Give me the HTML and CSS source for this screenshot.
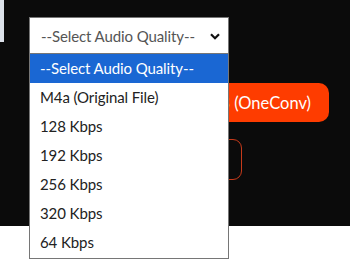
FILE: index.html
```html
<!DOCTYPE html>
<html lang="en">
<head>
    <meta charset="UTF-8">
    <meta name="viewport" content="width=device-width, initial-scale=1.0">
    <title>Audio Download</title>
    <link rel="stylesheet" href="styles.css">
</head>
<body>

    <section class="hero">
        <div class="top-row">
            <div class="edge"></div>

            <!-- Quality picker, shown open -->
            <div class="picker">
                <div class="select">
                    <span class="select-text">--Select Audio Quality--</span>
                    <svg class="chevron" width="10" height="7" viewBox="0 0 10 7">
                        <path d="M1 1.2 L5 5.2 L9 1.2" fill="none" stroke="#111" stroke-width="2.2"/>
                    </svg>
                </div>
                <ul class="options">
                    <li class="option selected">--Select Audio Quality--</li>
                    <li class="option">M4a (Original File)</li>
                    <li class="option">128 Kbps</li>
                    <li class="option">192 Kbps</li>
                    <li class="option">256 Kbps</li>
                    <li class="option">320 Kbps</li>
                    <li class="option">64 Kbps</li>
                </ul>
            </div>
        </div>

        <div class="actions">
            <button class="btn-main">Download MP3 (OneConv)</button>
            <button class="btn-outline"></button>
        </div>
    </section>

    <footer class="below"></footer>

</body>
</html>
```

FILE: styles.css
```css
body {
    margin: 0;
    background-color: #fff;
    font-family: "Source Sans Pro", Lato, "Noto Sans", sans-serif;
}

.hero {
    position: relative;
    z-index: 2;
    height: 226px;
    background-color: #0b0b0b;
}

.below {
    height: 38px;
    background-color: #fff;
}

.top-row {
    display: flex;
    align-items: flex-start;
    height: 53px;
}

.edge {
    width: 4px;
    height: 42px;
    background-color: #dde2ea;
}

.picker {
    position: relative;
    margin-left: 25px;
    margin-top: 17px;
    z-index: 3;
}

.select {
    box-sizing: border-box;
    display: flex;
    align-items: center;
    justify-content: space-between;
    width: 200px;
    height: 37px;
    padding: 0 8px 0 11px;
    border: 1px solid #767676;
    background: #fff;
    color: #555;
    font-size: 15px;
    letter-spacing: -0.1px;
}

.chevron {
    display: block;
    margin-top: 1px;
}

.options {
    position: absolute; /* open dropdown lies over the page */
    top: 36px;
    left: 0;
    box-sizing: border-box;
    width: 200px;
    margin: 0;
    padding: 0 0 1px;
    list-style: none;
    border: 1px solid #767676;
    background: #fff;
}

.option {
    height: 29px;
    line-height: 29px;
    padding-left: 10px;
    font-size: 15px;
    letter-spacing: -0.1px;
    color: #222;
    white-space: nowrap;
}

.option.selected {
    background-color: #1a67d3;
    color: #fff;
}

.actions {
    display: flex;
    flex-direction: column;
    align-items: flex-start;
}

.btn-main {
    box-sizing: border-box;
    width: 250px;
    height: 39px;
    margin: 30px 0 0 79px;
    padding: 0 18px 0 0;
    border: none;
    border-radius: 10px;
    background-color: #fe3c00;
    color: #fff;
    font-family: Lato, "Noto Sans", sans-serif;
    font-size: 16.5px;
    text-align: right;
}

.btn-outline {
    box-sizing: border-box;
    width: 160px;
    height: 41px;
    margin: 17px 0 0 82px;
    border: 1px solid #c63a1a;
    border-radius: 9px;
    background: transparent;
}
```
